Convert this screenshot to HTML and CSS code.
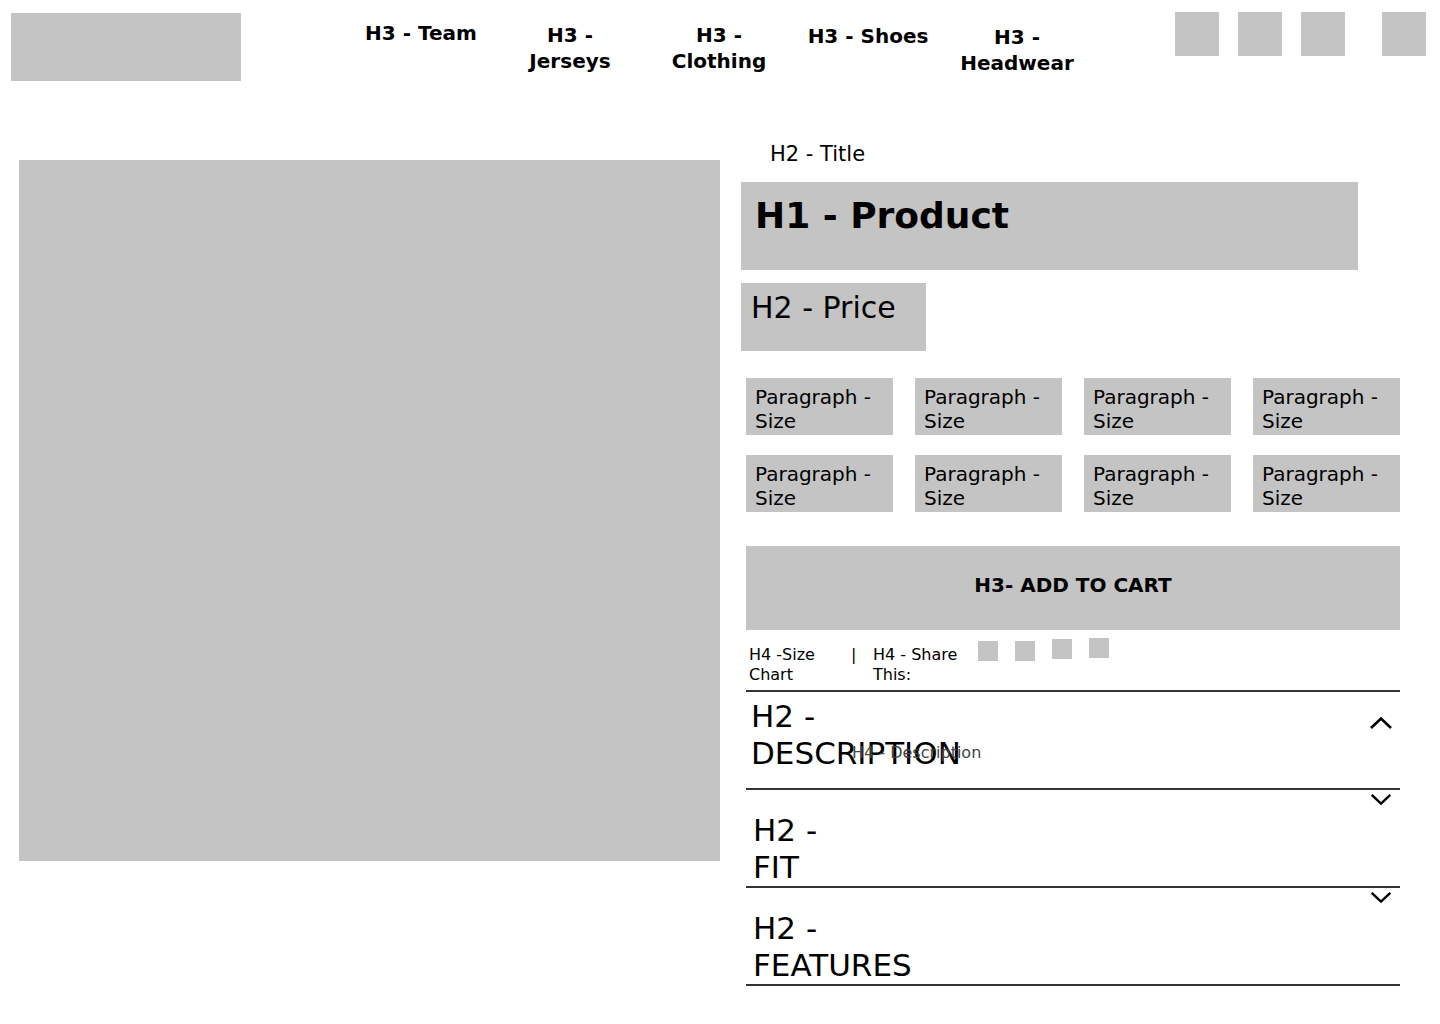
FILE: index.html
```html
<!doctype html>
<html lang="en">

<head>
  <meta charset="utf-8">
  <title>Product Page Wireframe</title>
  <meta name="viewport" content="width=device-width,initial-scale=1.0">
  <link rel="stylesheet" href="styles.css">
</head>

<body>

  <header class="wf-header">
    <div class="wf-logo"></div>
    <nav class="wf-nav">
      <h3 class="wf-nav-item">H3 - Team</h3>
      <h3 class="wf-nav-item">H3 - Jerseys</h3>
      <h3 class="wf-nav-item">H3 - Clothing</h3>
      <h3 class="wf-nav-item">H3 - Shoes</h3>
      <h3 class="wf-nav-item">H3 - Headwear</h3>
    </nav>
    <div class="wf-tools">
      <span class="wf-tool"></span>
      <span class="wf-tool"></span>
      <span class="wf-tool"></span>
      <span class="wf-tool wf-tool-cart"></span>
    </div>
  </header>

  <main class="wf-product">
    <div class="wf-image"></div>

    <section class="wf-details">
      <h2 class="wf-title">H2 - Title</h2>
      <div class="wf-name">
        <h1>H1 - Product</h1>
      </div>
      <div class="wf-price">
        <h2>H2 - Price</h2>
      </div>

      <div class="wf-sizes">
        <p class="wf-size">Paragraph - Size</p>
        <p class="wf-size">Paragraph - Size</p>
        <p class="wf-size">Paragraph - Size</p>
        <p class="wf-size">Paragraph - Size</p>
        <p class="wf-size">Paragraph - Size</p>
        <p class="wf-size">Paragraph - Size</p>
        <p class="wf-size">Paragraph - Size</p>
        <p class="wf-size">Paragraph - Size</p>
      </div>

      <button class="wf-cart" type="button">H3- ADD TO CART</button>

      <div class="wf-share">
        <h4 class="wf-size-chart">H4 -Size Chart</h4>
        <span class="wf-pipe">|</span>
        <h4 class="wf-share-label">H4 - Share This:</h4>
        <div class="wf-social">
          <span class="wf-social-icon"></span>
          <span class="wf-social-icon"></span>
          <span class="wf-social-icon"></span>
          <span class="wf-social-icon"></span>
        </div>
      </div>

      <div class="wf-accordion">
        <div class="wf-acc wf-acc-open">
          <h2 class="wf-acc-title">H2 - DESCRIPTION</h2>
          <svg class="wf-chevron" width="24" height="14" viewBox="0 0 24 14">
            <polyline points="2,12 12,2.5 22,12" fill="none" stroke="#000" stroke-width="2.6"/>
          </svg>
          <h4 class="wf-acc-body">H4 - Description</h4>
        </div>
        <div class="wf-acc">
          <svg class="wf-chevron" width="24" height="14" viewBox="0 0 24 14">
            <polyline points="2,2 12,11.5 22,2" fill="none" stroke="#000" stroke-width="2.6"/>
          </svg>
          <h2 class="wf-acc-title">H2 - FIT</h2>
        </div>
        <div class="wf-acc">
          <svg class="wf-chevron" width="24" height="14" viewBox="0 0 24 14">
            <polyline points="2,2 12,11.5 22,2" fill="none" stroke="#000" stroke-width="2.6"/>
          </svg>
          <h2 class="wf-acc-title">H2 - FEATURES</h2>
        </div>
      </div>
    </section>
  </main>

</body>

</html>
```

FILE: styles.css
```css
:root {
  --block: #c4c4c4;
  --ink: #000;
  --rule: #333;
}

html body {
  margin: 0;
  padding: 0;
}

body {
  font-family: "DejaVu Sans", "Liberation Sans", sans-serif;
  color: var(--ink);
  background-color: #fff;
  width: 1440px;
}

h1, h2, h3, h4, p {
  margin: 0;
}

/* header */

.wf-header {
  display: flex;
  align-items: flex-start;
  padding: 12px 14px 0 11px;
}

.wf-logo {
  width: 230px;
  height: 68px;
  margin-top: 1px;
  background-color: var(--block);
}

.wf-nav {
  display: flex;
  gap: 23px;
  margin-left: 117px;
  padding-top: 8px;
}

.wf-nav-item {
  width: 126px;
  font-size: 20px;
  line-height: 26px;
  font-weight: bold;
  text-align: center;
}

.wf-nav-item:nth-child(2),
.wf-nav-item:nth-child(3) {
  margin-top: 2px;
}

.wf-nav-item:nth-child(4) {
  margin-top: 3px;
}

.wf-nav-item:nth-child(5) {
  margin-top: 4px;
}

.wf-tools {
  display: flex;
  gap: 19px;
  margin-left: auto;
}

.wf-tool {
  display: block;
  width: 44px;
  height: 44px;
  background-color: var(--block);
}

.wf-tool-cart {
  margin-left: 18px;
}

/* product */

.wf-product {
  display: grid;
  grid-template-columns: 701px 659px;
  column-gap: 21px;
  align-items: start;
  padding: 61px 0 0 19px;
}

.wf-image {
  width: 701px;
  height: 701px;
  margin-top: 18px;
  background-color: var(--block);
}

.wf-details {
  display: flex;
  flex-direction: column;
  align-items: flex-start;
}

.wf-title {
  font-size: 21px;
  line-height: 24px;
  font-weight: normal;
  padding-left: 29px;
}

.wf-name {
  width: 617px;
  height: 88px;
  margin-top: 16px;
  padding: 12px 14px 0;
  box-sizing: border-box;
  background-color: var(--block);
}

.wf-name h1 {
  font-size: 36px;
  line-height: 44px;
  font-weight: bold;
}

.wf-price {
  width: 185px;
  height: 68px;
  margin-top: 13px;
  padding: 7px 10px 0;
  box-sizing: border-box;
  background-color: var(--block);
}

.wf-price h2 {
  font-size: 30px;
  line-height: 36px;
  font-weight: normal;
}

.wf-sizes {
  display: grid;
  grid-template-columns: repeat(4, 147px);
  column-gap: 22px;
  row-gap: 20px;
  margin: 27px 0 0 5px;
}

.wf-size {
  height: 57px;
  padding: 7px 9px 0;
  box-sizing: border-box;
  font-size: 20px;
  line-height: 24px;
  background-color: var(--block);
}

.wf-cart {
  display: flex;
  align-items: center;
  justify-content: center;
  width: 654px;
  height: 84px;
  margin: 34px 0 0 5px;
  padding: 0 0 6px;
  border: none;
  font-family: inherit;
  font-size: 20px;
  font-weight: bold;
  color: var(--ink);
  background-color: var(--block);
}

.wf-share {
  display: flex;
  align-items: flex-start;
  margin: 15px 0 0 8px;
  height: 45px;
}

.wf-share h4 {
  font-size: 16px;
  line-height: 20px;
  font-weight: normal;
}

.wf-size-chart {
  width: 102px;
}

.wf-pipe {
  font-size: 16px;
  line-height: 20px;
  width: 22px;
}

.wf-share-label {
  width: 92px;
}

.wf-social {
  display: flex;
  align-items: flex-start;
  gap: 17px;
  margin: -4px 0 0 13px;
}

.wf-social-icon {
  display: block;
  width: 20px;
  height: 20px;
  background-color: var(--block);
}

.wf-social-icon:nth-child(3) {
  margin-top: -2px;
}

.wf-social-icon:nth-child(4) {
  margin-top: -3px;
}

/* accordion */

.wf-accordion {
  width: 654px;
  margin-left: 5px;
  border-top: 2px solid var(--rule);
}

.wf-acc {
  position: relative;
  display: flex;
  flex-direction: column;
  height: 98px;
  box-sizing: border-box;
  padding: 3px 7px 0 7px;
  border-bottom: 2px solid var(--rule);
}

.wf-acc-title {
  width: 90px;
  font-size: 31px;
  line-height: 37px;
  font-weight: normal;
  margin-top: 6px;
}

.wf-acc .wf-chevron {
  align-self: flex-end;
}

.wf-acc-open {
  flex-direction: row;
  justify-content: space-between;
  align-items: flex-start;
  padding: 6px 7px 0 5px;
}

.wf-acc-open .wf-acc-title {
  margin-top: 0;
}

.wf-acc-open .wf-chevron {
  align-self: flex-start;
  margin-top: 18px;
}

.wf-acc-body {
  position: absolute;
  left: 106px;
  top: 51px;
  font-size: 16px;
  line-height: 20px;
  font-weight: normal;
  color: #444;
}
```
